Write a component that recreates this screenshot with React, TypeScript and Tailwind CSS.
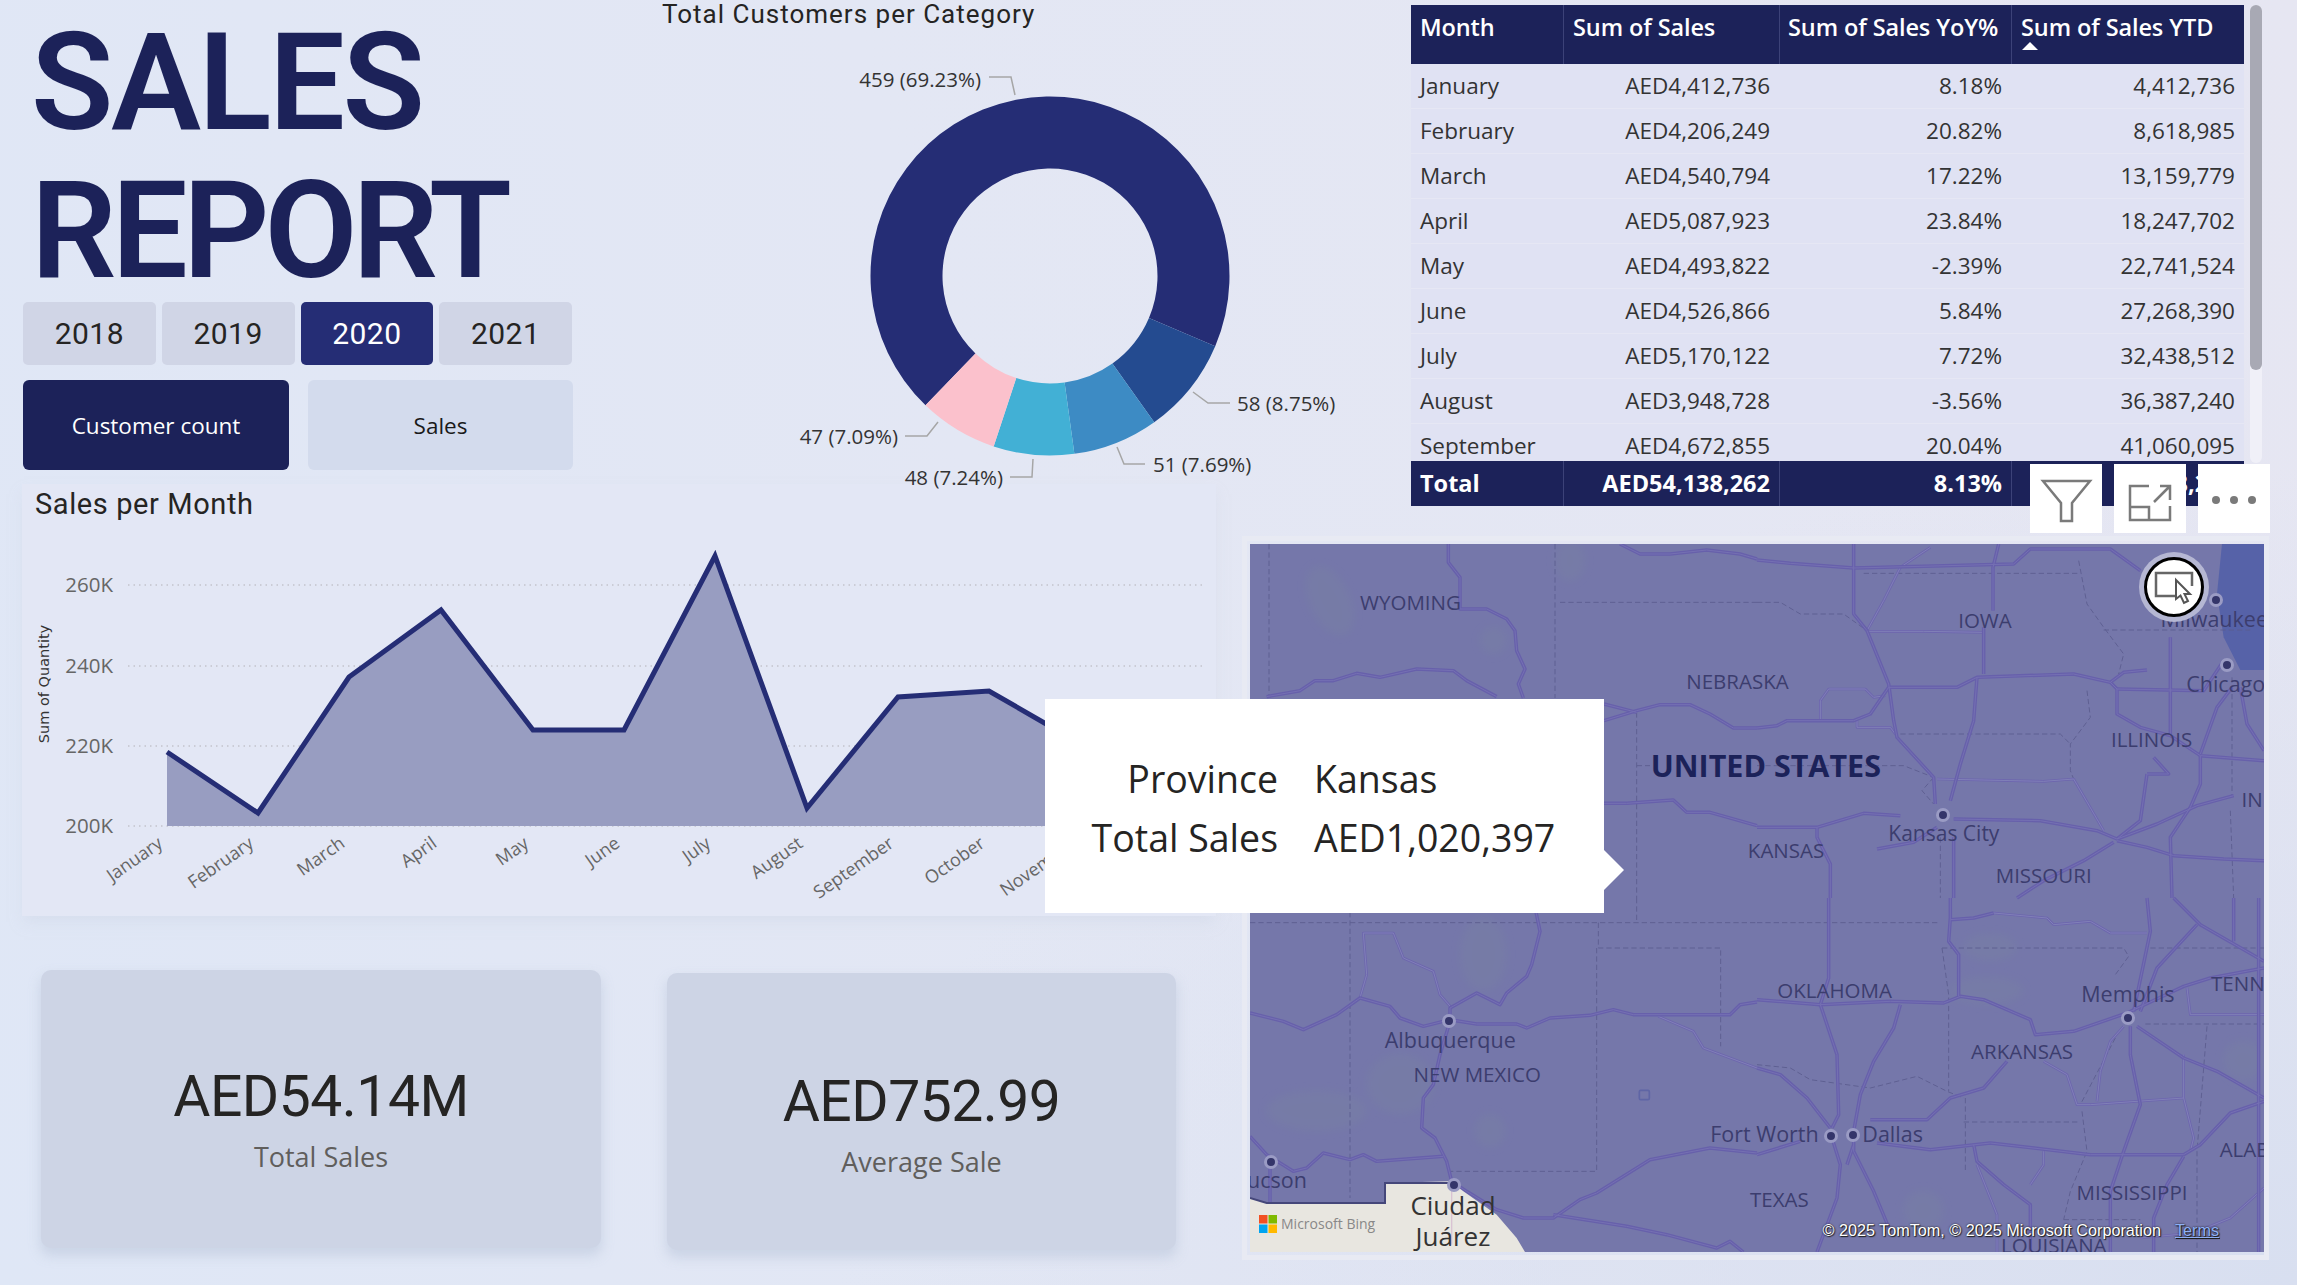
import React from 'react';

const din = "font-['Roboto',sans-serif]";
const seg = "font-['Open_Sans',sans-serif]";

const YEARS = ['2018', '2019', '2020', '2021'];

const TABLE = [
  ['January', 'AED4,412,736', '8.18%', '4,412,736'],
  ['February', 'AED4,206,249', '20.82%', '8,618,985'],
  ['March', 'AED4,540,794', '17.22%', '13,159,779'],
  ['April', 'AED5,087,923', '23.84%', '18,247,702'],
  ['May', 'AED4,493,822', '-2.39%', '22,741,524'],
  ['June', 'AED4,526,866', '5.84%', '27,268,390'],
  ['July', 'AED5,170,122', '7.72%', '32,438,512'],
  ['August', 'AED3,948,728', '-3.56%', '36,387,240'],
  ['September', 'AED4,672,855', '20.04%', '41,060,095'],
];

// donut slices, degrees clockwise from the top
const SLICES = [
  { from: 223.9, to: 473, color: '#252d75' },
  { from: 113, to: 144.5, color: '#244b90' },
  { from: 144.5, to: 172.2, color: '#3d8bc4' },
  { from: 172.2, to: 198.3, color: '#42b0d5' },
  { from: 198.3, to: 223.9, color: '#fbc1cc' },
];

const polar = (cx: number, cy: number, r: number, deg: number) => {
  const a = (deg * Math.PI) / 180;
  return [cx + r * Math.sin(a), cy - r * Math.cos(a)];
};

const arc = (cx: number, cy: number, ro: number, ri: number, from: number, to: number) => {
  const large = to - from > 180 ? 1 : 0;
  const [x1, y1] = polar(cx, cy, ro, from);
  const [x2, y2] = polar(cx, cy, ro, to);
  const [x3, y3] = polar(cx, cy, ri, to);
  const [x4, y4] = polar(cx, cy, ri, from);
  return `M${x1} ${y1}A${ro} ${ro} 0 ${large} 1 ${x2} ${y2}L${x3} ${y3}A${ri} ${ri} 0 ${large} 0 ${x4} ${y4}Z`;
};

const Donut = () => (
  <svg className="absolute left-[640px] top-0 overflow-visible" width="620" height="484">
    {SLICES.map((s) => (
      <path key={s.color} d={arc(410, 276, 179.5, 107.5, s.from, s.to)} fill={s.color} />
    ))}
    <g fill="none" stroke="#a6a6a6" strokeWidth="1.5">
      <path d="M349 77H371L375 95" />
      <path d="M553 392L568 403H590" />
      <path d="M477 447L484 464H505" />
      <path d="M393 459L392 477H370" />
      <path d="M298 422L287 436H265" />
    </g>
    <g fill="#333" fontFamily="Open Sans, sans-serif" fontSize="20.5">
      <text x="341" y="87" textAnchor="end">459 (69.23%)</text>
      <text x="597" y="411">58 (8.75%)</text>
      <text x="513" y="472">51 (7.69%)</text>
      <text x="363" y="485" textAnchor="end">48 (7.24%)</text>
      <text x="258" y="444" textAnchor="end">47 (7.09%)</text>
    </g>
  </svg>
);

const POINTS = [
  [167, 752], [258, 813], [349, 677], [441, 610], [533, 730], [624, 730],
  [715, 556], [807, 808], [898, 697], [989, 691], [1081, 744], [1172, 760],
];
const MONTHS = ['January', 'February', 'March', 'April', 'May', 'June', 'July', 'August', 'September', 'October', 'November', 'December'];
const TICKS = [['260K', 585], ['240K', 666], ['220K', 746], ['200K', 826]] as const;

// chart svg is drawn in page pixels, shifted up by the panel top of 484
const SalesChart = () => {
  const line = POINTS.map(([x, y]) => `${x},${y - 484}`).join(' ');
  return (
    <svg className="absolute left-[-22px] top-0" width="1216" height="432">
      {TICKS.map(([t, y]) => (
        <g key={t}>
          <line x1="128" x2="1204" y1={y - 484} y2={y - 484} stroke="#c4c4cc" strokeWidth="1.5" strokeDasharray="1.5 4" />
          <text x="113" y={y - 484 + 7} textAnchor="end" fontFamily="Open Sans, sans-serif" fontSize="20.5" fill="#666">{t}</text>
        </g>
      ))}
      <polygon points={`167,${826 - 484} ${line} 1172,${826 - 484}`} fill="#989dc1" />
      <polyline points={line} fill="none" stroke="#252d75" strokeWidth="5" />
      {POINTS.map(([x], i) => (
        <text
          key={MONTHS[i]}
          transform={`translate(${x - 3} ${846 - 484}) rotate(-35)`}
          textAnchor="end"
          fontFamily="Open Sans, sans-serif"
          fontSize="18"
          fill="#666"
        >
          {MONTHS[i]}
        </text>
      ))}
      <text
        transform={`translate(49 ${684 - 484}) rotate(-90)`}
        textAnchor="middle"
        fontFamily="DejaVu Sans, sans-serif"
        fontSize="14.5"
        fill="#333"
      >
        Sum of Quantity
      </text>
    </svg>
  );
};

const KpiCard = ({ value, label, className }: { value: string; label: string; className: string }) => (
  <div className={`flex flex-col items-center justify-center rounded-[10px] bg-[#cdd4e5] shadow-[0_7px_12px_1px_rgba(198,207,226,0.8)] ${className}`}>
    <div className={`${din} text-[57px] leading-[68px] tracking-[-0.5px] text-[#252423]`}>{value}</div>
    <div className={`${seg} mt-[9px] text-[27px] leading-[34px] text-[#605e5c]`}>{label}</div>
  </div>
);

const COLS = 'grid grid-cols-[152px_216px_232px_233px]';

const SalesTable = () => (
  <div className={`${seg} relative h-[501px] w-[833px] text-[22.5px]`}>
    <div className={`${COLS} h-[59px] bg-[#1c2259] text-[23.5px] font-semibold tracking-[-0.1px] text-white`}>
      <div className="px-[9px] pt-[8px] leading-[28px]">Month</div>
      <div className="border-l border-[#3c4278] px-[9px] pt-[8px] leading-[28px]">Sum of Sales</div>
      <div className="border-l border-[#3c4278] px-[8px] pt-[8px] leading-[28px] whitespace-nowrap">Sum of Sales YoY%</div>
      <div className="border-l border-[#3c4278] px-[9px] pt-[8px] leading-[28px] whitespace-nowrap">
        Sum of Sales YTD
        <div className="ml-[1px] mt-[1px] h-0 w-0 border-x-[8px] border-b-[8px] border-x-transparent border-b-white" />
      </div>
    </div>
    <div className="h-[397px] overflow-hidden bg-[#e0e2f3] text-[#333]">
      {TABLE.map((r) => (
        <div key={r[0]} className={`${COLS} h-[45px] items-center border-b border-[#e6e7f4]`}>
          <div className="px-[9px]">{r[0]}</div>
          <div className="px-[9px] text-right">{r[1]}</div>
          <div className="px-[9px] text-right">{r[2]}</div>
          <div className="px-[9px] text-right">{r[3]}</div>
        </div>
      ))}
    </div>
    <div className={`${COLS} h-[45px] items-center bg-[#1c2259] text-[23.5px] font-bold text-white`}>
      <div className="px-[9px]">Total</div>
      <div className="flex h-full items-center justify-end border-l border-[#3c4278] px-[9px]">AED54,138,262</div>
      <div className="flex h-full items-center justify-end border-l border-[#3c4278] px-[9px]">8.13%</div>
      <div className="flex h-full items-center justify-end border-l border-[#3c4278] px-[9px]">54,138,262</div>
    </div>
  </div>
);

// map paths are traced per quadrant, in units of a third of a pixel
const ROADS_TL = [
  'M595 0V55L630 100V195H710L770 225L795 260L800 320L825 375L805 420L820 462',
  'M50 458L150 440L195 410H250L320 388L390 400L500 375L610 380L650 410L740 458',
  'M1110 0L1170 30H1260L1370 18L1470 30L1521 45',
  'M1062 530L1160 500L1230 482H1320L1380 510L1450 552H1521',
  'M1062 480L1160 505',
  'M1062 778H1130L1270 768L1310 805H1380L1521 845',
];
const ROADS_TR = [
  'M0 48L100 58L290 72L770 60L820 15H1060L1150 80',
  'M290 0V210L330 260L395 420L410 530L420 580L530 700L535 780',
  'M725 0L708 70V200M680 250V390',
  'M0 552L60 545L90 530H290L340 510L395 430H600L660 400L950 390L1060 415L1100 385L1170 378',
  'M1060 415L1080 435V510L1150 550L1240 575L1330 635L1521 650',
  'M1240 280V570M1080 435L1340 440L1400 350',
  'M660 400L650 530L610 660L580 770',
  'M0 850H180L320 808L430 815M590 825L850 830L1020 860L1080 885L1200 840L1320 785L1430 755',
  'M180 850V880L220 960V1062M360 915L470 895L540 850M590 880V1062',
  'M1070 895L980 950L860 1010L780 1062M1080 890L1170 910L1250 935L1400 945L1521 950',
  'M1170 690H1235L1190 640M1170 690L1150 830L1080 885',
  'M1330 635V720L1300 790L1240 880L1245 1062M1425 430L1380 490L1330 630M1450 430L1470 540L1521 620',
];
const MINOR_TR = [
  'M335 262H500L680 265',
  'M190 525V470L215 435H325L350 460L385 455',
  'M300 530V550H400L415 570',
  'M540 705L860 712L950 705L1040 860',
  'M330 260L380 170L430 70L520 10',
];
const ROADS_BL = [
  'M858 42L870 100L845 200L830 235L770 285L750 320L680 285L600 330V370',
  'M0 345L100 370L160 395L260 350L330 300L420 325L450 360L520 385L600 365L680 378H800L830 390L900 360L1020 352L1090 335L1150 350H1440L1470 320L1521 312',
  'M600 370L570 470L550 560L520 600L515 690L555 720L590 790L605 850L650 880L740 935L820 960H910L990 905L1040 885L1200 785L1380 750L1521 765',
  'M910 950L1130 985L1250 1010L1400 1050L1440 1030L1480 1062',
  'M0 715L50 770L130 820L170 810L220 765L300 785L340 770L380 790L580 775',
  'M60 800V915',
];
const MINOR_BL = [
  'M330 300L350 230L340 105H430L460 180L550 220L570 290L605 330',
  'M1225 355L1330 400L1360 450L1521 510',
];
const ROADS_BR = [
  'M0 305L190 320L400 310L560 315L610 295L680 305L820 365L835 410L950 400L1110 345L1280 265L1360 240L1521 210',
  'M580 0V60L575 130L605 170V295M580 65L650 60L710 45',
  'M215 0V240L190 320L240 470L245 650L225 690',
  'M430 320L410 390L350 490L310 590L290 700',
  'M0 510L70 530L150 600L220 690M0 770L130 730',
  'M225 720L250 800L240 900L180 1062M290 710V760L350 880L400 1000M270 800L290 740',
  'M360 735L520 755L700 735L1000 770L1280 770L1330 740L1420 645L1521 610',
  'M340 665H510L580 600L680 570L750 490',
  'M650 740L660 790L740 860L820 920V1062',
  'M1120 385V470L1150 620L1100 760L1060 880V1062',
  'M1140 385L1280 480L1380 520L1521 600',
  'M1170 0L1180 100L1130 340M1250 0L1330 80L1521 190M1320 80L1200 210L1150 340M1430 0V130M1505 0V1062',
  'M1280 775L1230 860L1190 960V1062',
];
const MINOR_BR = [
  'M710 45L870 60L890 80L1000 70L1060 105H1170',
  'M860 490L930 530L960 620H1000L1280 600',
  'M1020 610L1030 520L1060 430L1100 385',
  'M660 800L720 950V1062M860 760V800L820 860',
  'M1280 470V600L1310 720L1300 760M1290 270L1300 350H1521',
  'M1521 870L1420 960L1310 1005L1150 1020',
];

const Lines = ({ main, minor = [], dashed, at }: { main: string[]; minor?: string[]; dashed: string[]; at: string }) => (
  <g transform={at} fill="none" strokeLinejoin="round">
    <g stroke="#5b5c8e" strokeWidth="3" strokeDasharray="16 9" opacity="0.85">
      {dashed.map((d) => <path key={d} d={d} />)}
    </g>
    <g stroke="#6d66ae" strokeWidth="8">
      {minor.map((d) => <path key={d} d={d} />)}
    </g>
    <g stroke="#8180b8" strokeWidth="3">
      {minor.map((d) => <path key={d} d={d} />)}
    </g>
    <g stroke="#6760ab" strokeWidth="10.5">
      {main.map((d) => <path key={d} d={d} />)}
    </g>
    <g stroke="#7570b3" strokeWidth="3">
      {main.map((d) => <path key={d} d={d} />)}
    </g>
  </g>
);

const MX = (z: number) => (z - 15) / 1.483;
const MY = (z: number) => (z - 30) / 2.077;

const LABELS: [string, number, number, string][] = [
  ['WYOMING', 253, 150, 'text-[20.5px]'],
  ['IOWA', 1105, 187, 'text-[20.5px]'],
  ['Milwaukee', 1445, 185, 'text-[21.5px]'],
  ['Chicago', 1462, 320, 'text-[21.5px]'],
  ['NEBRASKA', 738, 314, 'text-[20.5px]'],
  ['ILLINOIS', 1352, 434, 'text-[20.5px]'],
  ['IN', 1501, 560, 'text-[20.5px]'],
  ['Kansas City', 1044, 633, 'text-[21px]'],
  ['KANSAS', 810, 665, 'text-[20.5px]'],
  ['MISSOURI', 1192, 718, 'text-[20.5px]'],
  ['OKLAHOMA', 882, 957, 'text-[20.5px]'],
  ['TENN', 1480, 942, 'text-[20.5px]'],
  ['Memphis', 1317, 965, 'text-[21.5px]'],
  ['Albuquerque', 312, 1060, 'text-[21.5px]'],
  ['NEW MEXICO', 352, 1130, 'text-[20.5px]'],
  ['ARKANSAS', 1160, 1084, 'text-[20.5px]'],
  ['Fort Worth', 778, 1255, 'text-[21.5px]'],
  ['Dallas', 968, 1255, 'text-[21.5px]'],
  ['ALAB', 1490, 1286, 'text-[20.5px]'],
  ['ucson', 55, 1352, 'text-[21.5px]'],
  ['TEXAS', 800, 1391, 'text-[20.5px]'],
  ['MISSISSIPPI', 1323, 1376, 'text-[20.5px]'],
  ['LOUISIANA', 1207, 1485, 'text-[20.5px]'],
];
const CITIES = [[1448, 147], [1464, 282], [1043, 592], [1317, 1015], [310, 1021], [877, 1260], [909, 1257], [46, 1313], [318, 1362]];

const MapPanel = () => (
  <div className="ml-[2px] mt-[30px] w-[1027px] border-[5px] border-[#e8eaf3] px-[3px] py-[3px]">
    <div className={`${seg} relative h-[708px] w-[1014px] overflow-hidden bg-[#7577aa]`}>
      <svg className="absolute inset-0 h-full w-full" viewBox="0 0 3042 2124">
        <defs>
          <filter id="terrain"><feGaussianBlur stdDeviation="14" /></filter>
        </defs>
        <path d="M2916 0H3042V378H2971L2921 280L2901 150Z" fill="#5662a8" />
        <g filter="url(#terrain)" fill="#7c8b9c" opacity="0.22">
          <ellipse cx="240" cy="170" rx="60" ry="110" transform="rotate(-25 240 170)" />
          <ellipse cx="960" cy="50" rx="45" ry="60" />
          <ellipse cx="730" cy="290" rx="40" ry="40" />
          <ellipse cx="700" cy="1230" rx="70" ry="110" />
          <ellipse cx="450" cy="1620" rx="100" ry="90" />
          <ellipse cx="200" cy="1700" rx="150" ry="60" />
          <ellipse cx="720" cy="1760" rx="45" ry="50" />
          <ellipse cx="2210" cy="1340" rx="110" ry="40" />
          <ellipse cx="2220" cy="1210" rx="80" ry="40" />
          <ellipse cx="2980" cy="1550" rx="60" ry="60" />
          <ellipse cx="2020" cy="2000" rx="60" ry="60" />
        </g>
        <Lines
          at="translate(0 0)"
          main={ROADS_TL}
          dashed={['M57 0V458', 'M915 0V462', 'M930 175H1521', 'M1160 505V1062', 'M1160 665H1200']}
        />
        <Lines
          at="translate(1521 0)"
          main={ROADS_TR}
          minor={MINOR_TR}
          dashed={[
            'M320 88H965',
            'M0 175H70L130 210H260L330 260',
            'M430 570H910L940 600',
            'M0 665H440L530 700',
            'M1040 258H1480',
            'M1425 400V760',
            'M1420 800L1430 1062',
            'M965 50L990 180L1040 250L1100 330L1085 390',
            'M990 440L1000 520L940 600V680L950 705',
            'M530 700L495 740L530 780',
            'M550 880V1062',
          ]}
        />
        <Lines
          at="translate(0 1062)"
          main={ROADS_BL}
          minor={MINOR_BL}
          dashed={['M0 74H1521', 'M300 42V900', 'M1045 74V150H1412V445', 'M1040 150V820H600', 'M1160 0V74']}
        />
        <Lines
          at="translate(1521 1062)"
          main={ROADS_BR}
          minor={MINOR_BR}
          dashed={[
            'M0 74H550',
            'M555 150H1100L1115 175L1075 230',
            'M555 150L575 290V580',
            'M625 600V820',
            'M620 672H970',
            'M1165 378H1521',
            'M1350 385L1320 760V1062',
            'M920 965H1150',
            'M0 500L100 510L160 545L340 570L480 535L570 580L620 600',
            'M975 640L990 760L940 880L920 965',
            'M1075 420L970 620',
            'M1180 150H1521',
          ]}
        />
        <g transform="translate(0 1062)">
          <path d="M405 855V915H50L0 900V1062H825L800 1020L740 950L640 880L600 850Z" fill="#e8e6e0" />
          <path d="M0 900L50 915H405V855H600" fill="none" stroke="#45477a" strokeWidth="6" />
          <path d="M605 880V1040" fill="none" stroke="#d9c3d3" strokeWidth="4" />
          <rect x="1168" y="577" width="30" height="28" rx="4" fill="none" stroke="#5f65a5" strokeWidth="5" />
        </g>
      </svg>
      {CITIES.map(([x, y]) => (
        <span
          key={`${x}-${y}`}
          className="absolute h-[14px] w-[14px] -translate-x-1/2 -translate-y-1/2 rounded-full border-[3px] border-[#9a9bc4] bg-[#34356a]"
          style={{ left: MX(x), top: MY(y) }}
        />
      ))}
      {LABELS.map(([t, x, y, size]) => (
        <span
          key={t}
          className={`absolute -translate-x-1/2 -translate-y-1/2 whitespace-nowrap text-[#3c3d6e] ${size}`}
          style={{ left: MX(x), top: MY(y) }}
        >
          {t}
        </span>
      ))}
      <span
        className="absolute -translate-x-1/2 -translate-y-1/2 whitespace-nowrap text-[30.5px] font-bold text-[#1c2259]"
        style={{ left: MX(780), top: MY(492) }}
      >
        UNITED STATES
      </span>
      <div className="absolute left-[203px] top-[646px] flex -translate-x-1/2 flex-col items-center text-[26px] leading-[31px] text-[#333]">
        <span>Ciudad</span>
        <span>Juárez</span>
      </div>
      {/* bing logo */}
      <div className="absolute bottom-[18px] left-[9px] flex items-center gap-[4px] text-[14px] text-[#888]">
        <svg width="18" height="18" viewBox="0 0 18 18">
          <rect width="8.5" height="8.5" fill="#f25022" />
          <rect x="9.5" width="8.5" height="8.5" fill="#7fba00" />
          <rect y="9.5" width="8.5" height="8.5" fill="#00a4ef" />
          <rect x="9.5" y="9.5" width="8.5" height="8.5" fill="#ffb900" />
        </svg>
        <span>Microsoft Bing</span>
      </div>
      <div className="absolute bottom-[12px] right-[45px] flex gap-[14px] font-['Liberation_Sans',sans-serif] text-[16.2px] leading-[20px] text-white [text-shadow:0_0_2px_#111,1px_1px_1px_#222]">
        <span>© 2025 TomTom, © 2025 Microsoft Corporation</span>
        <span className="text-[#8fb0f5] underline">Terms</span>
      </div>
      {/* visual cursor button */}
      <div className="absolute left-[889px] top-[8px] flex h-[70px] w-[70px] items-center justify-center rounded-full bg-[#b5b7d3]">
        <div className="flex h-[60px] w-[60px] items-center justify-center rounded-full border-[3px] border-black bg-white">
          <svg width="44" height="38" viewBox="0 0 44 38">
            <path d="M26 28H4V5H40V18" fill="none" stroke="#666" strokeWidth="2.5" />
            <path d="M24 12V31L28.5 27.5 32 35 36 33 32.5 26H38Z" fill="#fff" stroke="#555" strokeWidth="2" />
          </svg>
        </div>
      </div>
    </div>
  </div>
);

const HeaderIcons = () => (
  <div className="absolute left-[2030px] top-[464px] flex gap-[12px]">
    <div className="h-[69px] w-[72px] bg-white">
      <svg width="72" height="69" viewBox="0 0 72 69" fill="none" stroke="#7a7a7a" strokeWidth="2.5">
        <path d="M13 17H60L42 39V57H31V39Z" />
      </svg>
    </div>
    <div className="h-[69px] w-[72px] bg-white">
      <svg width="72" height="69" viewBox="0 0 72 69" fill="none" stroke="#7a7a7a" strokeWidth="2.5">
        <path d="M35 22H16V56H56V42M16 43H35V56M40 38L56 22M46 22H56V36" />
      </svg>
    </div>
    <div className="h-[69px] w-[72px] bg-white">
      <svg width="72" height="69" viewBox="0 0 72 69" fill="#7a7a7a">
        <circle cx="18" cy="36" r="4" />
        <circle cx="36" cy="36" r="4" />
        <circle cx="54" cy="36" r="4" />
      </svg>
    </div>
  </div>
);

const Tooltip = () => (
  <div className="absolute left-[1045px] top-[699px] z-20 h-[214px] w-[559px] bg-white">
    <div className={`${seg} grid grid-cols-[233px_auto] gap-x-[36px] pt-[50px] text-[37.5px] leading-[59px] text-[#252423]`}>
      <div className="text-right">Province</div>
      <div>Kansas</div>
      <div className="text-right">Total Sales</div>
      <div>AED1,020,397</div>
    </div>
    <div className="absolute left-full top-[151px] h-0 w-0 border-y-[20px] border-l-[20px] border-y-transparent border-l-white" />
  </div>
);

export default function App() {
  return (
    <div className="relative flex h-[1285px] w-[2297px] overflow-hidden bg-[radial-gradient(ellipse_at_100%_100%,#d8dff0_0%,rgba(216,223,240,0)_45%),linear-gradient(75deg,#dfe7f6_0%,#e3e7f4_45%,#e6e6f2_100%)]">
      <div className="w-[1240px] shrink-0">
        {/* top row: title, slicers and donut */}
        <div className="relative z-10 h-[484px]">
          <div className={`${din} pl-[31px] pt-[9px] text-[135px] font-semibold leading-[148px] text-[#1c2259]`}>
            <div className="tracking-[-2.5px]">SALES</div>
            <div className="tracking-[-5px]">REPORT</div>
          </div>
          <div className="ml-[23px] mt-[-3px] grid w-[549px] grid-cols-4 gap-[6px]">
            {YEARS.map((y) => (
              <div
                key={y}
                className={`${din} flex h-[63px] items-center justify-center rounded-[5px] text-[30px] tracking-[0.5px] ${y === '2020' ? 'bg-[#252d75] text-white' : 'bg-[#d0d5e6] text-[#252423]'}`}
              >
                {y}
              </div>
            ))}
          </div>
          <div className={`${seg} ml-[23px] mt-[15px] flex gap-[19px] text-[22.5px]`}>
            <div className="flex h-[90px] w-[266px] items-center justify-center rounded-[6px] bg-[#1c2259] pt-[2px] text-white">Customer count</div>
            <div className="flex h-[90px] w-[265px] items-center justify-center rounded-[6px] bg-[#d3dbed] pt-[2px] text-[#1a1a1a]">Sales</div>
          </div>
          <div className={`${din} absolute left-[662px] top-[-5px] text-[26px] tracking-[1px] text-[#252423]`}>Total Customers per Category</div>
          <Donut />
        </div>
        {/* line chart panel */}
        <div className="relative ml-[22px] h-[432px] w-[1194px] bg-[#e3e7f5] shadow-[0_8px_12px_-2px_rgba(208,215,232,0.5)]">
          <div className={`${din} absolute left-[13px] top-[-1px] text-[29px] tracking-[0.6px] text-[#252423]`}>Sales per Month</div>
          <SalesChart />
        </div>
        {/* kpi cards */}
        <div className="flex pt-[54px]">
          <KpiCard value="AED54.14M" label="Total Sales" className="ml-[41px] h-[278px] w-[560px] pt-[18px]" />
          <KpiCard value="AED752.99" label="Average Sale" className="ml-[66px] mt-[3px] h-[277px] w-[509px] pt-[24px]" />
        </div>
      </div>

      <div className="flex-1 pt-[5px]">
        <div className="flex">
          <div className="ml-[171px]">
            <SalesTable />
          </div>
          <div className="ml-[6px] h-[458px] w-[12px] rounded-full bg-[#f0f0f8]">
            <div className="h-[365px] w-[12px] rounded-full bg-[#a8a9b4]" />
          </div>
        </div>
        <MapPanel />
      </div>

      <Tooltip />
      <HeaderIcons />
    </div>
  );
}
